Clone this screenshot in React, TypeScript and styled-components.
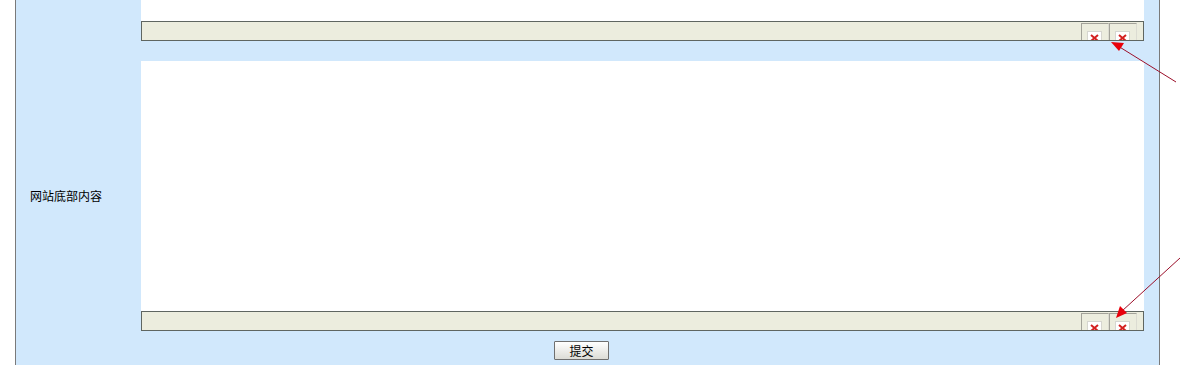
import styled, { createGlobalStyle } from 'styled-components'

const GlobalStyle = createGlobalStyle`
  body {
    margin: 0;
    background: #ffffff;
    font-family: "Noto Sans CJK SC", "Liberation Sans", sans-serif;
    font-size: 12px;
    color: #000;
  }
`

const Page = styled.div`
  position: relative;
  width: 1185px;
  height: 365px;
  overflow: hidden;
`
const Frame = styled.div`
  box-sizing: border-box;
  margin-left: 15px;
  width: 1145px;
  min-height: 365px;
  border-left: 1px solid #7a7a7a;
  border-right: 1px solid #7a7a7a;
  background: #d1e8fc;
  display: grid;
  grid-template-columns: 125px 1003px;
  align-content: start;
  padding-right: 15px;
`
const Label = styled.div`
  display: flex;
  align-items: center;
  padding-left: 14px;
  font-size: 12px;
  line-height: 14px;
`
const Field = styled.div<{ $gap?: number }>`
  display: flex;
  flex-direction: column;
  margin-bottom: ${({ $gap }) => $gap ?? 0}px;
`
const Editor = styled.div<{ $height: number }>`
  height: ${({ $height }) => $height}px;
  background: #ffffff;
`
const Toolbar = styled.div`
  box-sizing: border-box;
  height: 20px;
  border: 1px solid #5f6661;
  background: #ecedde;
  overflow: hidden;
  display: flex;
  justify-content: flex-end;
  align-items: flex-start;
  padding: 1px 6px 0 0;
`
const ToolButton = styled.div`
  box-sizing: border-box;
  width: 28px;
  height: 26px;
  border-left: 1px solid #a3a39a;
  border-top: 1px solid #a3a39a;
  border-right: 1px solid #dcdcd2;
  padding: 7px 0 0 5px;
`
const IconBox = styled.div`
  box-sizing: border-box;
  width: 15px;
  height: 15px;
  background: #ffffff;
  border: 1px solid #d6d6d0;
  display: flex;
  align-items: flex-end;
  justify-content: center;
  padding-bottom: 3px;
`
const ButtonRow = styled.div`
  grid-column: 1 / 3;
  display: flex;
  justify-content: flex-start;
  padding: 10px 0 0 538px;
`
const SubmitButton = styled.button`
  box-sizing: border-box;
  width: 55px;
  height: 19px;
  padding: 0;
  border: 1px solid #6f6f6f;
  border-radius: 1px;
  background: linear-gradient(#ffffff, #dcdcd6);
  font-family: "Noto Sans CJK SC", sans-serif;
  font-size: 12px;
  line-height: 16px;
  color: #000;
`
const Overlay = styled.svg`
  position: absolute;
  left: 0;
  top: 0;
  pointer-events: none;
`

const DeleteIcon = () => (
  <svg width="9" height="8" viewBox="0 0 9 8">
    <path d="M1 1 L8 7 M8 1 L1 7" stroke="#d42020" strokeWidth="2" />
  </svg>
)

const EditorToolbar = () => (
  <Toolbar>
    <ToolButton>
      <IconBox>
        <DeleteIcon />
      </IconBox>
    </ToolButton>
    <ToolButton>
      <IconBox>
        <DeleteIcon />
      </IconBox>
    </ToolButton>
  </Toolbar>
)

export default function App() {
  return (
    <Page>
      <GlobalStyle />
      <Frame>
        <Label />
        <Field $gap={20}>
          <Editor $height={21} />
          <EditorToolbar />
        </Field>
        <Label>网站底部内容</Label>
        <Field>
          <Editor $height={250} />
          <EditorToolbar />
        </Field>
        <ButtonRow>
          <SubmitButton>提交</SubmitButton>
        </ButtonRow>
      </Frame>
      <Overlay width="1185" height="365" viewBox="0 0 1185 365">
        <line x1="1176" y1="82" x2="1118" y2="46" stroke="#9c0f2a" strokeWidth="1" />
        <polygon points="1111,42 1124,43 1119,51" fill="#e8000b" />
        <line x1="1180" y1="258" x2="1122" y2="311" stroke="#9c0f2a" strokeWidth="1" />
        <polygon points="1116,318 1120,306 1127,313" fill="#e8000b" />
      </Overlay>
    </Page>
  )
}
